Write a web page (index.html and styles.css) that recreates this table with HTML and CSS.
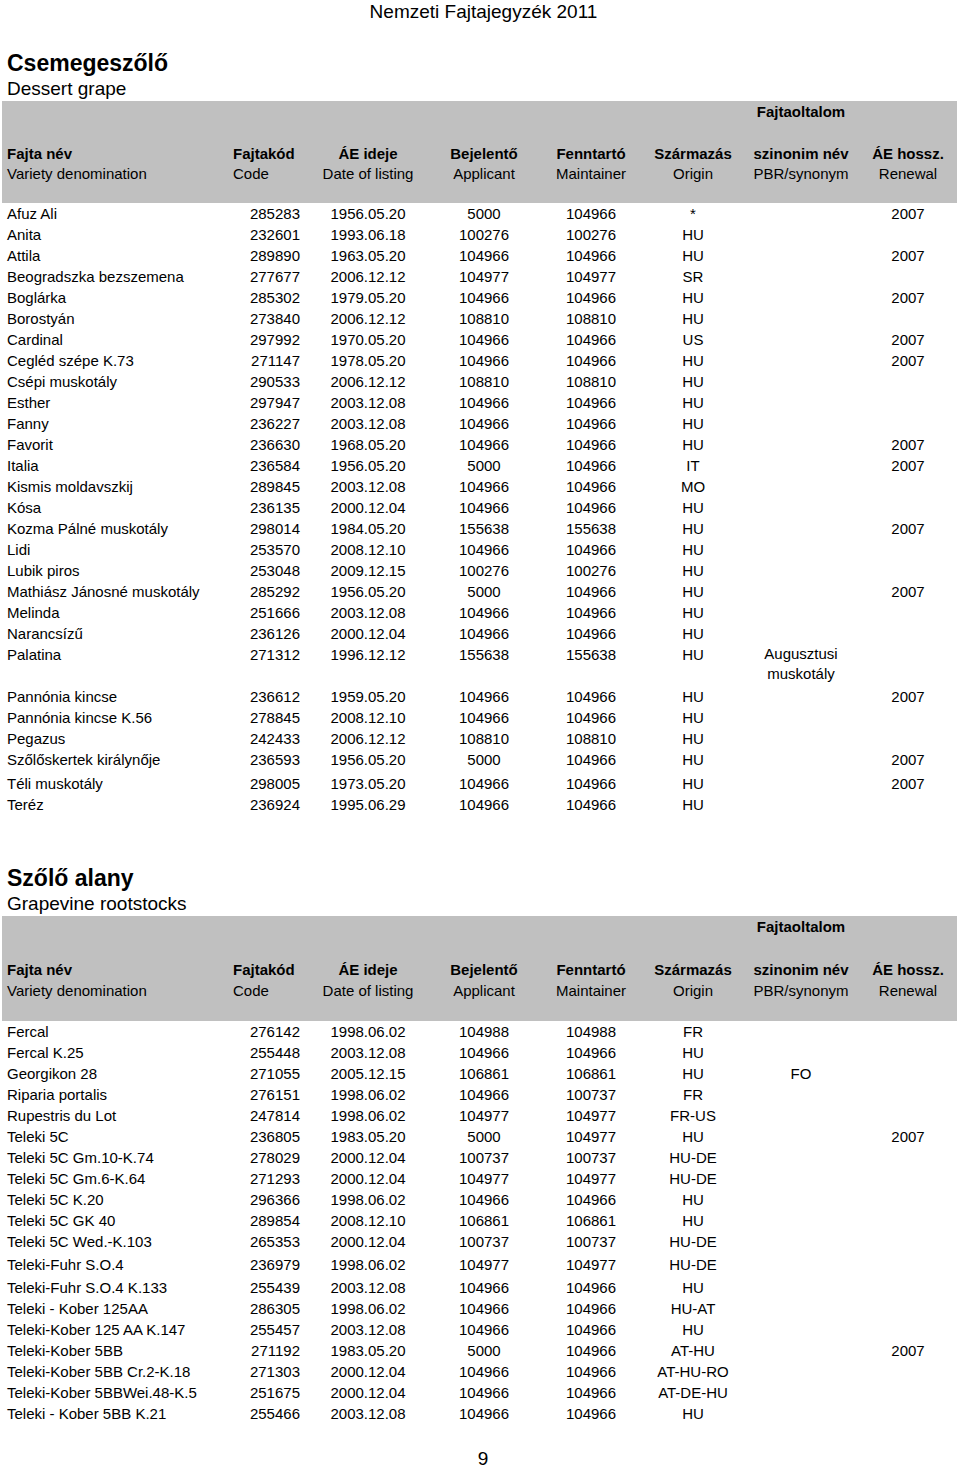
FILE: index.html
```html
<!DOCTYPE html>
<html lang="hu">
<head>
<meta charset="utf-8">
<title>Nemzeti Fajtajegyzék 2011</title>
<link rel="stylesheet" href="styles.css">
</head>
<body>
<div class="page-head">Nemzeti Fajtajegyzék 2011</div>

<section class="sect first">
  <h1 class="title">Csemegeszőlő</h1>
  <div class="subtitle">Dessert grape</div>
  <div class="thead">
    <div class="grid prot"><span></span><span></span><span></span><span></span><span></span><span></span><span class="b">Fajtaoltalom</span><span></span></div>
    <div class="grid hrow b"><span>Fajta név</span><span>Fajtakód</span><span>ÁE ideje</span><span>Bejelentő</span><span>Fenntartó</span><span>Származás</span><span>szinonim név</span><span>ÁE hossz.</span></div>
    <div class="grid hrow"><span>Variety denomination</span><span>Code</span><span>Date of listing</span><span>Applicant</span><span>Maintainer</span><span>Origin</span><span>PBR/synonym</span><span>Renewal</span></div>
  </div>
  <div class="tbody">
    <div class="grid row"><span>Afuz Ali</span><span>285283</span><span>1956.05.20</span><span>5000</span><span>104966</span><span>*</span><span></span><span>2007</span></div>
    <div class="grid row"><span>Anita</span><span>232601</span><span>1993.06.18</span><span>100276</span><span>100276</span><span>HU</span><span></span><span></span></div>
    <div class="grid row"><span>Attila</span><span>289890</span><span>1963.05.20</span><span>104966</span><span>104966</span><span>HU</span><span></span><span>2007</span></div>
    <div class="grid row"><span>Beogradszka bezszemena</span><span>277677</span><span>2006.12.12</span><span>104977</span><span>104977</span><span>SR</span><span></span><span></span></div>
    <div class="grid row"><span>Boglárka</span><span>285302</span><span>1979.05.20</span><span>104966</span><span>104966</span><span>HU</span><span></span><span>2007</span></div>
    <div class="grid row"><span>Borostyán</span><span>273840</span><span>2006.12.12</span><span>108810</span><span>108810</span><span>HU</span><span></span><span></span></div>
    <div class="grid row"><span>Cardinal</span><span>297992</span><span>1970.05.20</span><span>104966</span><span>104966</span><span>US</span><span></span><span>2007</span></div>
    <div class="grid row"><span>Cegléd szépe K.73</span><span>271147</span><span>1978.05.20</span><span>104966</span><span>104966</span><span>HU</span><span></span><span>2007</span></div>
    <div class="grid row"><span>Csépi muskotály</span><span>290533</span><span>2006.12.12</span><span>108810</span><span>108810</span><span>HU</span><span></span><span></span></div>
    <div class="grid row"><span>Esther</span><span>297947</span><span>2003.12.08</span><span>104966</span><span>104966</span><span>HU</span><span></span><span></span></div>
    <div class="grid row"><span>Fanny</span><span>236227</span><span>2003.12.08</span><span>104966</span><span>104966</span><span>HU</span><span></span><span></span></div>
    <div class="grid row"><span>Favorit</span><span>236630</span><span>1968.05.20</span><span>104966</span><span>104966</span><span>HU</span><span></span><span>2007</span></div>
    <div class="grid row"><span>Italia</span><span>236584</span><span>1956.05.20</span><span>5000</span><span>104966</span><span>IT</span><span></span><span>2007</span></div>
    <div class="grid row"><span>Kismis moldavszkij</span><span>289845</span><span>2003.12.08</span><span>104966</span><span>104966</span><span>MO</span><span></span><span></span></div>
    <div class="grid row"><span>Kósa</span><span>236135</span><span>2000.12.04</span><span>104966</span><span>104966</span><span>HU</span><span></span><span></span></div>
    <div class="grid row"><span>Kozma Pálné muskotály</span><span>298014</span><span>1984.05.20</span><span>155638</span><span>155638</span><span>HU</span><span></span><span>2007</span></div>
    <div class="grid row"><span>Lidi</span><span>253570</span><span>2008.12.10</span><span>104966</span><span>104966</span><span>HU</span><span></span><span></span></div>
    <div class="grid row"><span>Lubik piros</span><span>253048</span><span>2009.12.15</span><span>100276</span><span>100276</span><span>HU</span><span></span><span></span></div>
    <div class="grid row"><span>Mathiász Jánosné muskotály</span><span>285292</span><span>1956.05.20</span><span>5000</span><span>104966</span><span>HU</span><span></span><span>2007</span></div>
    <div class="grid row"><span>Melinda</span><span>251666</span><span>2003.12.08</span><span>104966</span><span>104966</span><span>HU</span><span></span><span></span></div>
    <div class="grid row"><span>Narancsízű</span><span>236126</span><span>2000.12.04</span><span>104966</span><span>104966</span><span>HU</span><span></span><span></span></div>
    <div class="grid row"><span>Palatina</span><span>271312</span><span>1996.12.12</span><span>155638</span><span>155638</span><span>HU</span><span class="syn">Augusztusi<br>muskotály</span><span></span></div>
    <div class="grid row"><span>Pannónia kincse</span><span>236612</span><span>1959.05.20</span><span>104966</span><span>104966</span><span>HU</span><span></span><span>2007</span></div>
    <div class="grid row"><span>Pannónia kincse K.56</span><span>278845</span><span>2008.12.10</span><span>104966</span><span>104966</span><span>HU</span><span></span><span></span></div>
    <div class="grid row"><span>Pegazus</span><span>242433</span><span>2006.12.12</span><span>108810</span><span>108810</span><span>HU</span><span></span><span></span></div>
    <div class="grid row"><span>Szőlőskertek királynője</span><span>236593</span><span>1956.05.20</span><span>5000</span><span>104966</span><span>HU</span><span></span><span>2007</span></div>
    <div class="grid row tall3"><span>Téli muskotály</span><span>298005</span><span>1973.05.20</span><span>104966</span><span>104966</span><span>HU</span><span></span><span>2007</span></div>
    <div class="grid row"><span>Teréz</span><span>236924</span><span>1995.06.29</span><span>104966</span><span>104966</span><span>HU</span><span></span><span></span></div>
  </div>
</section>

<section class="sect second">
  <h1 class="title">Szőlő alany</h1>
  <div class="subtitle">Grapevine rootstocks</div>
  <div class="thead wide">
    <div class="grid prot"><span></span><span></span><span></span><span></span><span></span><span></span><span class="b">Fajtaoltalom</span><span></span></div>
    <div class="grid hrow b"><span>Fajta név</span><span>Fajtakód</span><span>ÁE ideje</span><span>Bejelentő</span><span>Fenntartó</span><span>Származás</span><span>szinonim név</span><span>ÁE hossz.</span></div>
    <div class="grid hrow"><span>Variety denomination</span><span>Code</span><span>Date of listing</span><span>Applicant</span><span>Maintainer</span><span>Origin</span><span>PBR/synonym</span><span>Renewal</span></div>
  </div>
  <div class="tbody">
    <div class="grid row"><span>Fercal</span><span>276142</span><span>1998.06.02</span><span>104988</span><span>104988</span><span>FR</span><span></span><span></span></div>
    <div class="grid row"><span>Fercal K.25</span><span>255448</span><span>2003.12.08</span><span>104966</span><span>104966</span><span>HU</span><span></span><span></span></div>
    <div class="grid row"><span>Georgikon 28</span><span>271055</span><span>2005.12.15</span><span>106861</span><span>106861</span><span>HU</span><span>FO</span><span></span></div>
    <div class="grid row"><span>Riparia portalis</span><span>276151</span><span>1998.06.02</span><span>104966</span><span>100737</span><span>FR</span><span></span><span></span></div>
    <div class="grid row"><span>Rupestris du Lot</span><span>247814</span><span>1998.06.02</span><span>104977</span><span>104977</span><span>FR-US</span><span></span><span></span></div>
    <div class="grid row"><span>Teleki 5C</span><span>236805</span><span>1983.05.20</span><span>5000</span><span>104977</span><span>HU</span><span></span><span>2007</span></div>
    <div class="grid row"><span>Teleki 5C Gm.10-K.74</span><span>278029</span><span>2000.12.04</span><span>100737</span><span>100737</span><span>HU-DE</span><span></span><span></span></div>
    <div class="grid row"><span>Teleki 5C Gm.6-K.64</span><span>271293</span><span>2000.12.04</span><span>104977</span><span>104977</span><span>HU-DE</span><span></span><span></span></div>
    <div class="grid row"><span>Teleki 5C K.20</span><span>296366</span><span>1998.06.02</span><span>104966</span><span>104966</span><span>HU</span><span></span><span></span></div>
    <div class="grid row"><span>Teleki 5C GK 40</span><span>289854</span><span>2008.12.10</span><span>106861</span><span>106861</span><span>HU</span><span></span><span></span></div>
    <div class="grid row"><span>Teleki 5C Wed.-K.103</span><span>265353</span><span>2000.12.04</span><span>100737</span><span>100737</span><span>HU-DE</span><span></span><span></span></div>
    <div class="grid row tall2"><span>Teleki-Fuhr S.O.4</span><span>236979</span><span>1998.06.02</span><span>104977</span><span>104977</span><span>HU-DE</span><span></span><span></span></div>
    <div class="grid row tall2"><span>Teleki-Fuhr S.O.4 K.133</span><span>255439</span><span>2003.12.08</span><span>104966</span><span>104966</span><span>HU</span><span></span><span></span></div>
    <div class="grid row"><span>Teleki - Kober 125AA</span><span>286305</span><span>1998.06.02</span><span>104966</span><span>104966</span><span>HU-AT</span><span></span><span></span></div>
    <div class="grid row"><span>Teleki-Kober 125 AA K.147</span><span>255457</span><span>2003.12.08</span><span>104966</span><span>104966</span><span>HU</span><span></span><span></span></div>
    <div class="grid row"><span>Teleki-Kober 5BB</span><span>271192</span><span>1983.05.20</span><span>5000</span><span>104966</span><span>AT-HU</span><span></span><span>2007</span></div>
    <div class="grid row"><span>Teleki-Kober 5BB Cr.2-K.18</span><span>271303</span><span>2000.12.04</span><span>104966</span><span>104966</span><span>AT-HU-RO</span><span></span><span></span></div>
    <div class="grid row"><span>Teleki-Kober 5BBWei.48-K.5</span><span>251675</span><span>2000.12.04</span><span>104966</span><span>104966</span><span>AT-DE-HU</span><span></span><span></span></div>
    <div class="grid row"><span>Teleki - Kober 5BB K.21</span><span>255466</span><span>2003.12.08</span><span>104966</span><span>104966</span><span>HU</span><span></span><span></span></div>
  </div>
</section>

<div class="page-num">9</div>
</body>
</html>
```

FILE: styles.css
```css
html, body {
  margin: 0;
  padding: 0;
  background: #fff;
}
body {
  width: 960px;
  font-family: "Liberation Sans", Arial, sans-serif;
  color: #000;
  font-size: 15px;
}
.page-head {
  font-size: 19px;
  line-height: 24px;
  text-align: center;
  padding-left: 7px;
}
.sect.first {
  margin-top: 25px;
}
.sect.second {
  margin-top: 49px;
}
.title {
  margin: 0;
  padding-left: 7px;
  font-size: 23px;
  font-weight: bold;
  line-height: 28px;
}
.subtitle {
  padding-left: 7px;
  font-size: 19px;
  line-height: 24px;
}
.grid {
  display: grid;
  grid-template-columns: 230px 80px 116px 116px 98px 106px 110px 104px;
  align-items: start;
}
.grid > span {
  text-align: center;
  white-space: nowrap;
}
.grid > span:nth-child(1) {
  text-align: left;
  padding-left: 7px;
}
.thead {
  background: #c0c0c0;
  margin: 0 3px 0 2px;
  padding-top: 1px;
  padding-bottom: 19px;
}
.thead .grid {
  margin: 0 -3px 0 -2px;
}
.prot {
  line-height: 20px;
  margin-bottom: 22px !important;
}
.b {
  font-weight: bold;
}
.hrow {
  line-height: 20px;
}
.hrow > span:nth-child(2) {
  text-align: left;
  padding-left: 3px;
}
.thead.wide {
  padding-bottom: 20px;
}
.thead.wide .hrow {
  line-height: 21px;
}
.row {
  line-height: 21px;
}
.row > span:nth-child(2) {
  text-align: right;
  padding-right: 10px;
}
.row .syn {
  line-height: 20px;
  padding-bottom: 2px;
}
.row.tall3 {
  padding-top: 3px;
}
.row.tall2 {
  padding-top: 2px;
}
.page-num {
  margin-top: 23px;
  font-size: 19px;
  line-height: 24px;
  text-align: center;
  padding-left: 6px;
}
```
